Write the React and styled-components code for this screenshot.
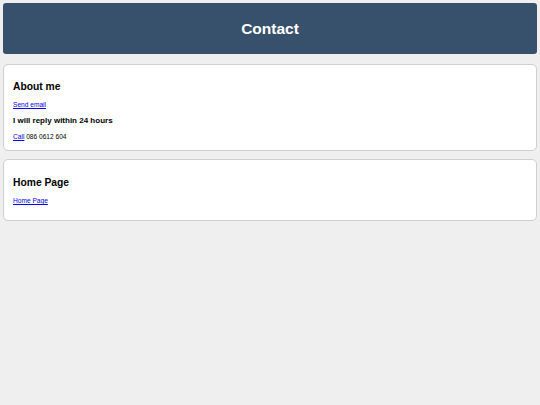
import React from "react";
import styled, { createGlobalStyle } from "styled-components";

const GlobalStyle = createGlobalStyle`
  html, body {
    margin: 0;
    padding: 0;
    background: #efefef;
    font-family: "Liberation Sans", Arial, sans-serif;
  }
`;

const Page = styled.div`
  padding: 3px 3px 0;
  display: flex;
  flex-direction: column;
`;

const Header = styled.header`
  height: 51px;
  background: #37506b;
  border-radius: 3px;
  display: flex;
  align-items: center;
  justify-content: center;
  margin-bottom: 10px;
`;

const Title = styled.h1`
  margin: 0;
  color: #ffffff;
  font-size: 15.5px;
  font-weight: bold;
  line-height: 20px;
`;

const Card = styled.section`
  background: #ffffff;
  border: 1px solid #cfcfcf;
  border-radius: 5px;
  padding: ${(p) => p.$top || "16px"} 9px ${(p) => p.$bottom || "9px"};
  margin-bottom: 8px;
`;

const CardTitle = styled.h2`
  margin: 0 0 8px;
  font-size: 10.3px;
  line-height: 12px;
  font-weight: bold;
  color: #000;
`;

const SubTitle = styled.h3`
  margin: 0 0 7px;
  font-size: 8px;
  line-height: 10px;
  font-weight: bold;
  color: #000;
`;

const Line = styled.p`
  margin: 0 0 7px;
  font-size: 6.6px;
  line-height: 8px;
  color: #000;

  &:last-child {
    margin-bottom: 0;
  }
`;

const A = styled.a`
  color: #0000ee;
  text-decoration: underline;
`;

const App = () => {
  return (
    <>
      <GlobalStyle />
      <Page>
        <Header>
          <Title>Contact</Title>
        </Header>
        <Card>
          <CardTitle>About me</CardTitle>
          <Line>
            <A href="#">Send email</A>
          </Line>
          <SubTitle>I will reply within 24 hours</SubTitle>
          <Line>
            <A href="#">Call</A> 086 0612 604
          </Line>
        </Card>
        <Card $top="17px" $bottom="15px">
          <CardTitle>Home Page</CardTitle>
          <Line>
            <A href="#">Home Page</A>
          </Line>
        </Card>
      </Page>
    </>
  );
};

export default App;
